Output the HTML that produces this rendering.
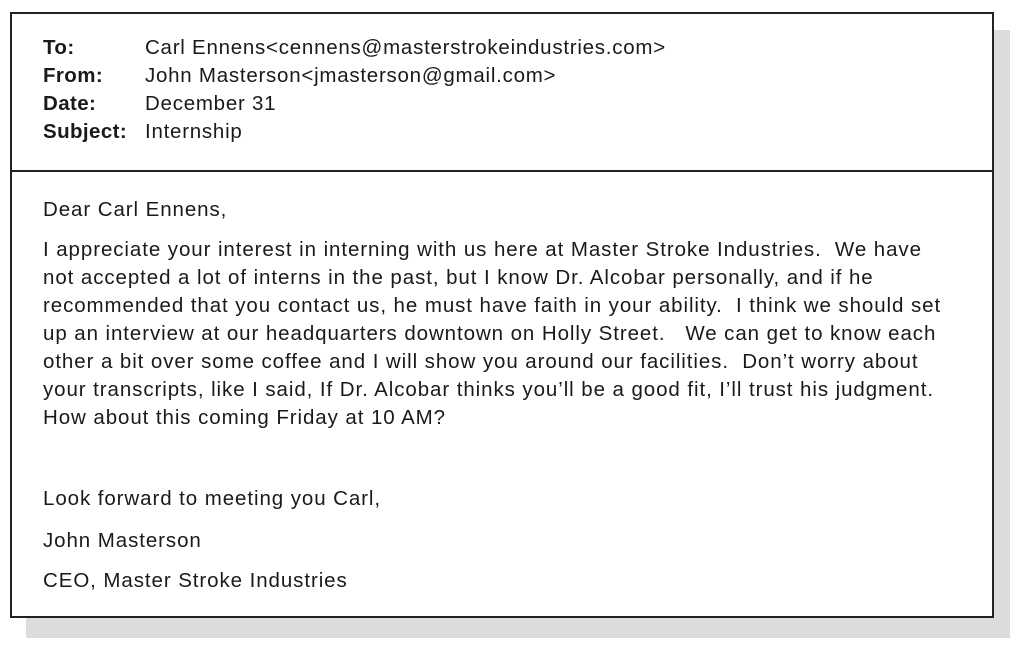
<!DOCTYPE html>
<html><head><style>
body{margin:0;width:1024px;height:654px;background:#fff;position:relative;font-family:"Liberation Sans",sans-serif;color:#1a1a1a;font-size:20.5px;letter-spacing:0.75px;overflow:hidden}
.sh{position:absolute;left:26px;top:30px;width:984px;height:608px;background:#dcdcdc}
.box{position:absolute;left:10px;top:12px;width:980px;height:602px;border:2px solid #222;background:#fff}
.div{position:absolute;left:0;right:0;top:156px;border-top:2px solid #222}
.t{position:absolute;white-space:nowrap;line-height:28px}
.bd{letter-spacing:0.92px}
b{font-weight:bold;letter-spacing:0.4px}
</style></head><body>
<div class="sh"></div>
<div class="box">
<div class="t" style="left:31px;top:20px"><b>To:</b><br><b>From:</b><br><b>Date:</b><br><b>Subject:</b></div>
<div class="t" style="left:133px;top:20px">Carl Ennens&lt;cennens@masterstrokeindustries.com&gt;<br>John Masterson&lt;jmasterson@gmail.com&gt;<br>December 31<br>Internship</div>
<div class="div"></div>
<div class="t bd" style="left:31px;top:182px">Dear Carl Ennens,</div>
<div class="t bd" style="left:31px;top:222px">I appreciate your interest in interning with us here at Master Stroke Industries.&nbsp; We have<br>not accepted a lot of interns in the past, but I know Dr. Alcobar personally, and if he<br>recommended that you contact us, he must have faith in your ability.&nbsp; I think we should set<br>up an interview at our headquarters downtown on Holly Street.&nbsp;&nbsp; We can get to know each<br>other a bit over some coffee and I will show you around our facilities.&nbsp; Don’t worry about<br>your transcripts, like I said, If Dr. Alcobar thinks you’ll be a good fit, I’ll trust his judgment.<br>How about this coming Friday at 10 AM?</div>
<div class="t bd" style="left:31px;top:471px">Look forward to meeting you Carl,</div>
<div class="t bd" style="left:31px;top:513px">John Masterson</div>
<div class="t bd" style="left:31px;top:553px">CEO, Master Stroke Industries</div>
</div>
</body></html>
